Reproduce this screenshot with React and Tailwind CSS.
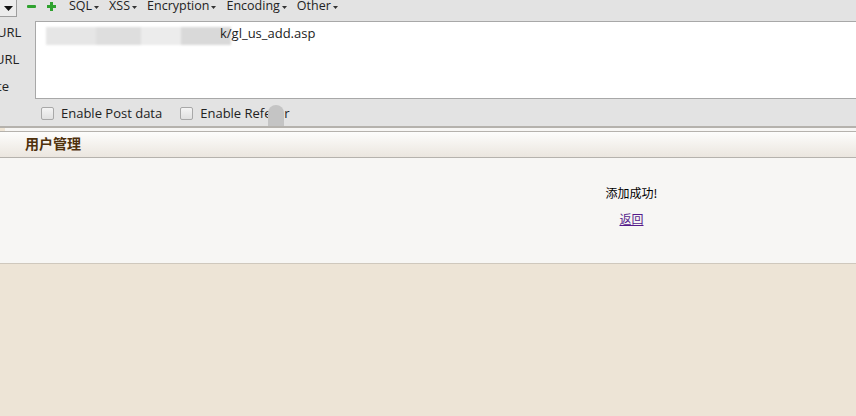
import React from "react";

const ui = { fontFamily: '"Open Sans", "Noto Sans", "Liberation Sans", sans-serif' };
const cjk = { fontFamily: '"Noto Sans CJK SC", "Noto Sans", sans-serif' };

const Caret = () => (
  <svg width="5" height="3" viewBox="0 0 5 3" className="ml-[2px] mt-[3px]">
    <path d="M0 0h5L2.5 3z" fill="#333" />
  </svg>
);

const MenuItem = ({ label }) => (
  <div className="flex items-center text-[12.5px] leading-none text-[#222]">
    {label}
    <Caret />
  </div>
);

const Checkbox = ({ label }) => (
  <label className="flex items-center gap-[7px] text-[13px] text-[#222]">
    <span className="w-[13px] h-[13px] rounded-[2px] border border-[#a8a8a8] bg-gradient-to-b from-[#f4f4f4] to-[#e0e0e0]" />
    {label}
  </label>
);

export default function App() {
  return (
    <div className="w-[856px] h-[416px] overflow-hidden bg-[#ede4d6] flex flex-col" style={ui}>
      {/* toolbar */}
      <div className="h-[21px] bg-[#e3e3e3] flex items-start">
        <div className="w-[17px] h-[17px] bg-[#ececec] border-r border-b border-[#9e9e9e] flex items-center justify-center">
          <svg width="9" height="5" viewBox="0 0 9 5">
            <path d="M0 0h9L4.5 5z" fill="#111" />
          </svg>
        </div>
        <div className="flex items-center h-[12px] ml-[10px] gap-[11px]">
          <svg width="9" height="9" viewBox="0 0 9 9">
            <rect x="0" y="3" width="9" height="3" rx="1" fill="#2fa22f" />
          </svg>
          <svg width="9" height="9" viewBox="0 0 9 9">
            <path d="M3 0h3v3h3v3H6v3H3V6H0V3h3z" fill="#2fa22f" />
          </svg>
        </div>
        <div className="flex items-center h-[12px] ml-[13px] gap-[10px]">
          <MenuItem label="SQL" />
          <MenuItem label="XSS" />
          <MenuItem label="Encryption" />
          <MenuItem label="Encoding" />
          <MenuItem label="Other" />
        </div>
      </div>

      {/* url area */}
      <div className="flex h-[78px] bg-[#e3e3e3]">
        <div className="w-[35px] h-[78px] overflow-hidden flex flex-col gap-[13px] pt-[4px] text-[13px] leading-[14px] text-[#222]">
          <span className="-ml-[3px]">URL</span>
          <span className="-ml-[5px]">URL</span>
          <span className="-ml-[3px]">te</span>
        </div>
        <div className="relative flex-1 h-[78px] bg-white border-t border-l border-b border-[#a8a8a8] text-[13px] text-[#222]">
          <div className="absolute left-[10px] top-[5px] flex blur-[1px]">
            <div className="w-[50px] h-[18px] bg-[#e6e6e6]" />
            <div className="w-[45px] h-[18px] bg-[#dedede]" />
            <div className="w-[40px] h-[18px] bg-[#ececec]" />
            <div className="w-[50px] h-[18px] bg-[#d9d9d9]" />
          </div>
          <span className="absolute left-[184px] top-[2px]">k/gl_us_add.asp</span>
        </div>
      </div>

      {/* checkbox row */}
      <div className="relative h-[29px] bg-[#e3e3e3] flex items-center gap-[18px] pl-[41px] pt-[2px] border-b-2 border-[#b5b2ad]">
        <Checkbox label="Enable Post data" />
        <Checkbox label="Enable Referer" />
        <div className="absolute left-[268px] top-[6px] w-[16px] h-[21px] rounded-t-full bg-[#c4c4c4]" />
      </div>

      {/* page */}
      <div className="flex flex-col bg-[#f7f6f4] border-l-[5px] border-[#efe5d5]">
        <div className="h-[3px]" />
        <div className="h-[27px] -ml-[5px] border-y border-[#b5b2ad] bg-gradient-to-b from-[#fdfdfc] to-[#ebe6df] flex items-center pl-[25px] pb-[4px]">
          <span className="text-[14px] font-bold text-[#4f310c] leading-none" style={cjk}>用户管理</span>
        </div>
      </div>
      <div className="h-[106px] bg-[#f7f6f4] border-b border-[#cfc8bd] flex flex-col items-center pl-[407px] pt-[27px]" style={cjk}>
        <span className="text-[12px] text-black leading-[16px]">添加成功!</span>
        <a href="#" className="text-[12px] text-[#551a8b] underline mt-[10px] leading-[16px]">返回</a>
      </div>
      <div className="flex-1" />
    </div>
  );
}
